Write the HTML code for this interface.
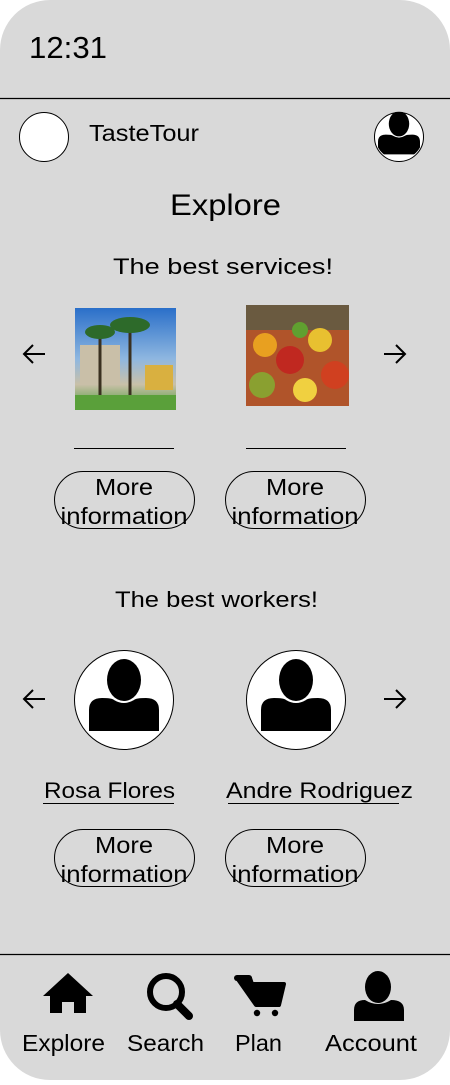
<!DOCTYPE html>
<html><head><meta charset="utf-8"><style>
body{margin:0;background:#fff;width:450px;height:1080px;overflow:hidden;font-family:"Liberation Sans",sans-serif;}
</style></head><body>
<svg width="450" height="1080" viewBox="0 0 450 1080" xmlns="http://www.w3.org/2000/svg" font-family="Liberation Sans, sans-serif" fill="#000">
<defs>
<g id="person"><ellipse cx="0" cy="-20" rx="17" ry="21"/><path d="M-35 31 V10 Q-35 -2 -22 -2 Q-12 -2 -10 0 Q0 6 10 0 Q12 -2 22 -2 Q35 -2 35 10 V31 Z"/></g>
<linearGradient id="sky" x1="0" y1="0" x2="0" y2="1"><stop offset="0" stop-color="#2a6fc9"/><stop offset="0.5" stop-color="#8fb7e0"/><stop offset="0.75" stop-color="#c9c0a8"/><stop offset="1" stop-color="#4a9a3a"/></linearGradient>
</defs>
<rect x="0" y="0" width="450" height="1080" rx="50" fill="#d9d9d9"/>
<text x="29" y="58" font-size="31" textLength="78" lengthAdjust="spacingAndGlyphs">12:31</text>
<line x1="0" y1="98.5" x2="450" y2="98.5" stroke="#000" stroke-width="1.2"/>
<circle cx="44" cy="137" r="24.5" fill="#fff" stroke="#000" stroke-width="1"/>
<text x="89" y="141" font-size="23" textLength="110" lengthAdjust="spacingAndGlyphs">TasteTour</text>
<circle cx="399" cy="137" r="24.5" fill="#fff" stroke="#000"/>
<g transform="translate(399,137) scale(0.6)"><clipPath id="c1"><circle cx="0" cy="0" r="40"/></clipPath><use href="#person" y="-2" clip-path="url(#c1)"/></g>
<text x="170" y="215" font-size="30" textLength="111" lengthAdjust="spacingAndGlyphs">Explore</text>
<text x="113" y="274" font-size="22" textLength="220" lengthAdjust="spacingAndGlyphs">The best services!</text>
<path d="M45 354 H24 M33 345 L24 354 L33 363" stroke="#000" stroke-width="2" fill="none"/>
<path d="M384 354 H405 M396 345 L405 354 L396 363" stroke="#000" stroke-width="2" fill="none"/>
<rect x="75" y="308" width="101" height="102" fill="url(#sky)"/>
<rect x="80" y="345" width="40" height="40" fill="#c9bfa8"/>
<rect x="145" y="365" width="28" height="25" fill="#d9b040"/>
<path d="M130 395 V330 M100 395 V335" stroke="#3a3020" stroke-width="3"/>
<ellipse cx="130" cy="325" rx="20" ry="8" fill="#2d6a2a"/><ellipse cx="100" cy="332" rx="15" ry="7" fill="#2d6a2a"/>
<rect x="75" y="395" width="101" height="15" fill="#5aa03a"/>
<rect x="246" y="305" width="103" height="101" fill="#b0542a"/>
<rect x="246" y="305" width="103" height="25" fill="#6a5a40"/>
<circle cx="265" cy="345" r="12" fill="#e8a020"/><circle cx="290" cy="360" r="14" fill="#c02820"/><circle cx="320" cy="340" r="12" fill="#e8c030"/><circle cx="335" cy="375" r="14" fill="#d04020"/><circle cx="262" cy="385" r="13" fill="#8aa030"/><circle cx="305" cy="390" r="12" fill="#f0d040"/><circle cx="300" cy="330" r="8" fill="#60a030"/>
<line x1="74" y1="448.5" x2="174" y2="448.5" stroke="#000"/>
<line x1="246" y1="448.5" x2="346" y2="448.5" stroke="#000"/>
<rect x="54.5" y="471.5" width="140" height="57" rx="28.5" fill="none" stroke="#000"/>
<rect x="225.5" y="471.5" width="140" height="57" rx="28.5" fill="none" stroke="#000"/>
<g font-size="23" text-anchor="middle"><text x="124" y="495" textLength="58" lengthAdjust="spacingAndGlyphs">More</text><text x="124" y="524" textLength="127" lengthAdjust="spacingAndGlyphs">information</text><text x="295" y="495" textLength="58" lengthAdjust="spacingAndGlyphs">More</text><text x="295" y="524" textLength="127" lengthAdjust="spacingAndGlyphs">information</text></g>
<text x="115" y="607" font-size="22" textLength="203" lengthAdjust="spacingAndGlyphs">The best workers!</text>
<path d="M45 699 H24 M33 690 L24 699 L33 708" stroke="#000" stroke-width="2" fill="none"/>
<path d="M384 699 H405 M396 690 L405 699 L396 708" stroke="#000" stroke-width="2" fill="none"/>
<circle cx="124" cy="700" r="49.5" fill="#fff" stroke="#000"/>
<circle cx="296" cy="700" r="49.5" fill="#fff" stroke="#000"/>
<use href="#person" x="124" y="700"/><use href="#person" x="296" y="700"/>
<text x="44" y="798" font-size="22" textLength="131" lengthAdjust="spacingAndGlyphs">Rosa Flores</text>
<line x1="43" y1="803.5" x2="174" y2="803.5" stroke="#000"/>
<text x="226" y="798" font-size="22" textLength="187" lengthAdjust="spacingAndGlyphs">Andre Rodriguez</text>
<line x1="228" y1="803.5" x2="399" y2="803.5" stroke="#000"/>
<rect x="54.5" y="829.5" width="140" height="57" rx="28.5" fill="none" stroke="#000"/>
<rect x="225.5" y="829.5" width="140" height="57" rx="28.5" fill="none" stroke="#000"/>
<g font-size="23" text-anchor="middle"><text x="124" y="853" textLength="58" lengthAdjust="spacingAndGlyphs">More</text><text x="124" y="882" textLength="127" lengthAdjust="spacingAndGlyphs">information</text><text x="295" y="853" textLength="58" lengthAdjust="spacingAndGlyphs">More</text><text x="295" y="882" textLength="127" lengthAdjust="spacingAndGlyphs">information</text></g>
<line x1="0" y1="954.5" x2="450" y2="954.5" stroke="#000" stroke-width="1.2"/>
<path d="M68 973 L93 996 H86 V1013 H74 V1002 H62 V1013 H50 V996 H43 Z"/>
<circle cx="166" cy="992" r="16" fill="none" stroke="#000" stroke-width="6"/>
<path d="M177 1004 L189 1016" stroke="#000" stroke-width="8" stroke-linecap="round"/>
<path d="M237 978 H250 L252 984 H284 L279 1005 H256 Z" stroke="#000" stroke-width="4" stroke-linejoin="round" stroke-linecap="round"/>
<path d="M237 978 H249" stroke="#000" stroke-width="6" stroke-linecap="round"/>
<circle cx="257" cy="1013" r="3.2"/><circle cx="275" cy="1013" r="3.2"/>
<ellipse cx="378" cy="987" rx="13" ry="16"/>
<path d="M354 1021 V1010 Q354 1000 365 1000 Q378 1008 391 1000 Q404 1000 404 1010 V1021 Z"/>
<g font-size="23"><text x="22" y="1051" textLength="83" lengthAdjust="spacingAndGlyphs">Explore</text><text x="127" y="1051" textLength="77" lengthAdjust="spacingAndGlyphs">Search</text><text x="235" y="1051" textLength="47" lengthAdjust="spacingAndGlyphs">Plan</text><text x="325" y="1051" textLength="92" lengthAdjust="spacingAndGlyphs">Account</text></g>
</svg>
</body></html>
